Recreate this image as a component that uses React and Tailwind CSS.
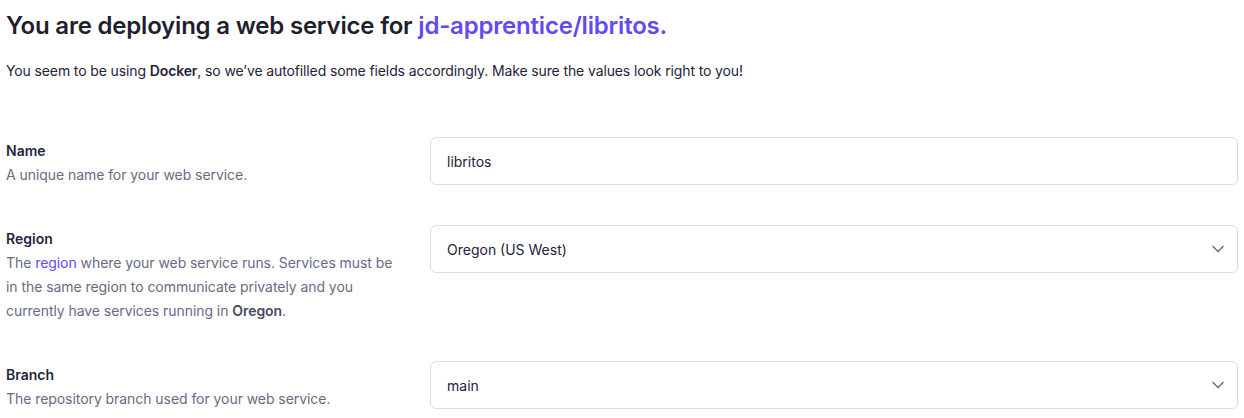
import React from "react";

function Chevron() {
  return (
    <svg width="20" height="20" viewBox="0 0 24 24" fill="none" stroke="#70748a" strokeWidth="2" strokeLinecap="round" strokeLinejoin="round">
      <path d="M6 9l6 6 6-6" />
    </svg>
  );
}

function Row({ label, children, field }) {
  return (
    <div className="flex">
      <div className="w-[424px] shrink-0 pt-[2px] -mb-[2px]">
        <div className="text-[14px] leading-[24px] font-semibold text-[#26263c]">{label}</div>
        <div className="text-[14px] leading-[24px] text-[#6a6a86] pr-[30px] tracking-[-0.06px]">{children}</div>
      </div>
      <div className="flex-1">{field}</div>
    </div>
  );
}

function Field({ value, select }) {
  return (
    <div className="h-[48px] border border-[#d5dcee] rounded-[6px] flex items-center justify-between pl-[16px] pr-[9px] text-[14px] text-[#23233a]">
      <span className="pt-[1px]">{value}</span>
      {select && <Chevron />}
    </div>
  );
}

export default function App() {
  return (
    <div className="bg-white px-[6px] font-['Inter',sans-serif] w-[1244px] h-[418px] overflow-hidden">
      <h1 className="text-[24px] leading-[50px] font-semibold text-[#1f1f2e] tracking-[-0.2px] pt-[1px]">
        You are deploying a web service for <span className="text-[#6549f2]">jd-apprentice/libritos.</span>
      </h1>
      <p className="text-[14px] leading-[24px] mt-[8px] text-[#23233a] tracking-[-0.12px]">
        You seem to be using <b className="font-semibold">Docker</b>, so we’ve autofilled some fields accordingly. Make sure the values look right to you!
      </p>
      <div className="mt-[54px] flex flex-col gap-[40px]">
        <Row label="Name" field={<Field value="libritos" />}>A unique name for your web service.</Row>
        <Row label="Region" field={<Field value="Oregon (US West)" select />}>
          The <span className="text-[#6549f2]">region</span> where your web service runs. Services must be in the same region to communicate privately and you currently have services running in <b className="font-semibold text-[#4a4a63]">Oregon</b>.
        </Row>
        <Row label="Branch" field={<Field value="main" select />}>The repository branch used for your web service.</Row>
      </div>
    </div>
  );
}
